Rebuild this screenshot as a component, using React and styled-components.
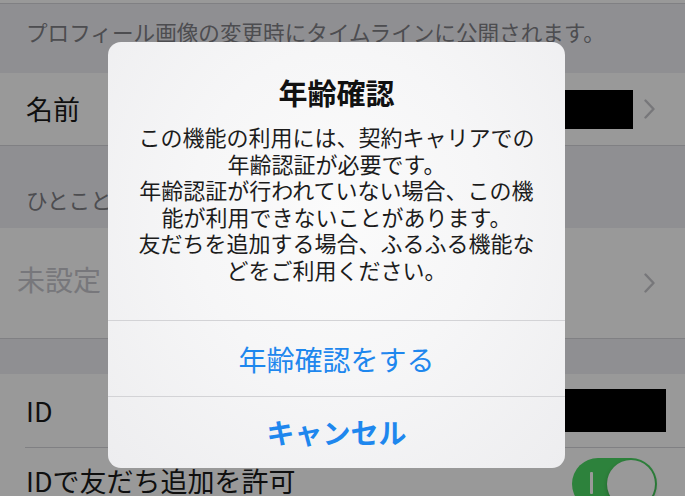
import React from "react";
import styled, { createGlobalStyle } from "styled-components";

const Global = createGlobalStyle`
  html, body { margin: 0; padding: 0; background: #efeff4; }
  body { font-family: "Noto Sans CJK JP", "Noto Sans", sans-serif; }
`;

const Screen = styled.div`
  position: relative;
  width: 685px;
  height: 496px;
  overflow: hidden;
  background: #efeff4;
  display: flex;
  flex-direction: column;
`;

const Row = styled.div`
  flex: none;
  height: ${(p) => p.$h}px;
  background: #ffffff;
  display: flex;
  align-items: center;
  padding-left: ${(p) => p.$pl ?? 26}px;
  padding-right: ${(p) => p.$pr ?? 28}px;
  box-sizing: border-box;
  border-bottom: ${(p) => (p.$noBorder ? "none" : "1px solid #d6d6da")};
  position: relative;
`;

const InsetDivider = styled.div`
  flex: none;
  height: 1px;
  background: #ffffff;
  padding-left: 25px;
  box-sizing: border-box;
  &::after {
    content: "";
    display: block;
    height: 1px;
    background: #d6d6da;
  }
`;

const Section = styled.div`
  flex: none;
  height: ${(p) => p.$h}px;
  box-sizing: border-box;
  padding: 0 26px;
  display: flex;
  align-items: ${(p) => p.$align || "flex-start"};
  padding-top: ${(p) => p.$pt || 0}px;
  padding-bottom: ${(p) => p.$pb || 0}px;
  border-bottom: ${(p) => (p.$border ? "1px solid #d6d6da" : "none")};
  font-size: 21.6px;
  line-height: 28px;
  color: #808086;
  white-space: nowrap;
`;

const Label = styled.span`
  flex: 1;
  font-size: ${(p) => p.$size || 27}px;
  line-height: 34px;
  color: ${(p) => p.$color || "#1a1a1a"};
  white-space: nowrap;
`;

const Redacted = styled.div`
  width: ${(p) => p.$w}px;
  height: ${(p) => p.$h}px;
  background: #000;
  margin-right: ${(p) => p.$mr || 0}px;
`;

const Chevron = styled.svg`
  width: 11px;
  height: 20px;
  flex: none;
`;

const Toggle = styled.div`
  width: 85px;
  height: 52px;
  border-radius: 26px;
  background: #4cd964;
  position: relative;
  margin-top: 22px;
  flex: none;
  &::before {
    content: "";
    position: absolute;
    left: 18px;
    top: 14px;
    width: 3px;
    height: 22px;
    background: #ffffff;
    border-radius: 1px;
  }
  &::after {
    content: "";
    position: absolute;
    right: 2px;
    top: 2px;
    width: 48px;
    height: 48px;
    border-radius: 50%;
    background: #ffffff;
    box-shadow: 0 2px 4px rgba(0, 0, 0, 0.25);
  }
`;

const Overlay = styled.div`
  position: absolute;
  inset: 0;
  background: rgba(0, 0, 0, 0.4);
`;

const Dialog = styled.div`
  position: absolute;
  left: 108px;
  top: 42px;
  width: 457px;
  border-radius: 13px;
  overflow: hidden;
  background: radial-gradient(ellipse at 50% 40%, #fbfbfb 0%, #f6f6f7 45%, #ededef 100%);
  display: flex;
  flex-direction: column;
`;

const DialogBody = styled.div`
  height: 278px;
  box-sizing: border-box;
  padding-top: 32px;
  display: flex;
  flex-direction: column;
  align-items: center;
`;

const Title = styled.div`
  font-size: 29px;
  line-height: 36px;
  font-weight: 700;
  color: #111;
`;

const Message = styled.div`
  margin-top: 13px;
  font-size: 22px;
  line-height: 26.5px;
  color: #1c1c1c;
  text-align: center;
`;

const Line = styled.span`
  display: block;
  white-space: nowrap;
`;

const ActionButton = styled.div`
  height: ${(p) => p.$h}px;
  border-top: 1px solid #d3d3d6;
  display: flex;
  align-items: center;
  justify-content: center;
  font-size: 28px;
  font-weight: ${(p) => (p.$bold ? 700 : 400)};
  color: #1e87ee;
  padding-bottom: ${(p) => p.$pb || 0}px;
  box-sizing: border-box;
`;

const ChevronIcon = () => (
  <Chevron viewBox="0 0 11 20">
    <polyline points="1.5,1.5 9.5,10 1.5,18.5" fill="none" stroke="#c7c7cc" strokeWidth="2.4" strokeLinecap="round" strokeLinejoin="round" />
  </Chevron>
);

const messageLines = [
  "この機能の利用には、契約キャリアでの",
  "年齢認証が必要です。",
  "年齢認証が行われていない場合、この機",
  "能が利用できないことがあります。",
  "友だちを追加する場合、ふるふる機能な",
  "どをご利用ください。",
];

export default function App() {
  return (
    <>
      <Global />
      <Screen>
        <Row $h={4} />
        <Section $h={69} $pt={14}>
          プロフィール画像の変更時にタイムラインに公開されます。
        </Section>
        <Row $h={73} $pr={30}>
          <Label>名前</Label>
          <Redacted $w={70} $h={39} $mr={11} />
          <ChevronIcon />
        </Row>
        <Section $h={82} $pt={40}>
          ひとこと
        </Section>
        <Row $h={111} $pl={17} $pr={30}>
          <Label $size={28} $color="#c7c7cd" style={{ marginTop: -8 }}>
            未設定
          </Label>
          <ChevronIcon />
        </Row>
        <Section $h={35} />
        <Row $h={73} $pr={19} $noBorder>
          <Label>ID</Label>
          <Redacted $w={102} $h={43} />
        </Row>
        <InsetDivider />
        <Row $h={80} $pr={28} $noBorder style={{ alignItems: "flex-start" }}>
          <Label style={{ marginTop: 16 }}>IDで友だち追加を許可</Label>
          <Toggle style={{ marginTop: 10 }} />
        </Row>
        <Overlay />
        <Dialog>
          <DialogBody>
            <Title>年齢確認</Title>
            <Message>
              {messageLines.map((l) => (
                <Line key={l}>{l}</Line>
              ))}
            </Message>
          </DialogBody>
          <ActionButton $h={76}>年齢確認をする</ActionButton>
          <ActionButton $h={72} $bold $pb={2}>
            キャンセル
          </ActionButton>
        </Dialog>
      </Screen>
    </>
  );
}
